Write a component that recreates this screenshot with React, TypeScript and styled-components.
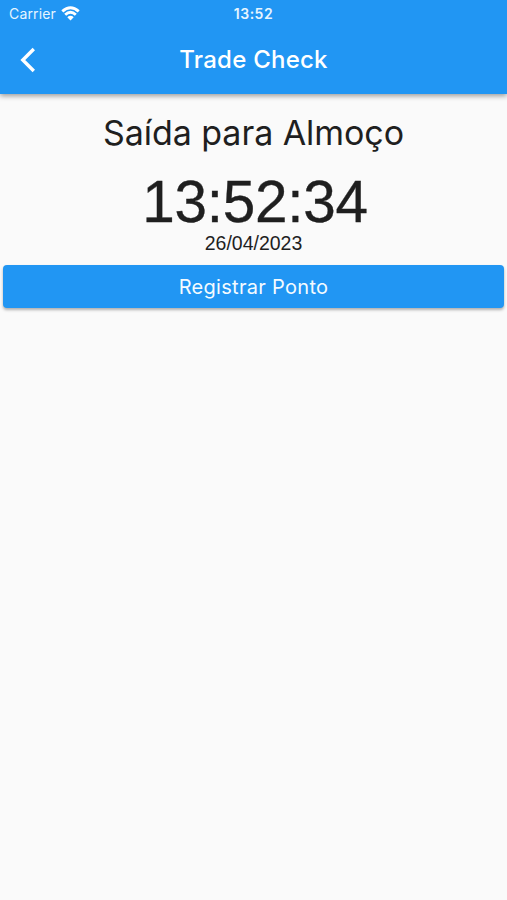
import React from "react";
import styled, { createGlobalStyle } from "styled-components";

const GlobalStyle = createGlobalStyle`
  * { box-sizing: border-box; }
  body { margin: 0; background: #fafafa; }
`;

const Screen = styled.div`
  min-height: 900px;
  background: #fafafa;
  color: #1f1f1f;
  font-family: Inter, "Liberation Sans", sans-serif;
  overflow: hidden;
`;

const Header = styled.header`
  height: 94px;
  background: #2196f3;
  color: #fff;
  box-shadow: 0 2px 5px rgba(0, 0, 0, 0.38);
`;

const StatusBar = styled.div`
  display: grid;
  grid-template-columns: 1fr auto 1fr;
  align-items: center;
  height: 27px;
  padding: 0 9px;
  color: #e6f5ff;
`;

const Carrier = styled.div`
  display: flex;
  align-items: center;
  gap: 5.5px;
  font-size: 14px;
  line-height: 27px;
  letter-spacing: 0.15px;
`;

const StatusTime = styled.time`
  font-size: 14px;
  font-weight: 600;
  line-height: 27px;
  letter-spacing: 0.5px;
`;

const NavBar = styled.nav`
  display: grid;
  grid-template-columns: 76px 1fr 76px;
  align-items: center;
  height: 65px;
`;

const BackButton = styled.button`
  display: flex;
  align-items: center;
  height: 48px;
  padding: 0 0 0 18px;
  border: 0;
  background: none;
  color: inherit;
`;

const Title = styled.h1`
  margin: 0;
  font-size: 24px;
  font-weight: 500;
  line-height: 32px;
  letter-spacing: 0.25px;
  text-align: center;
`;

const Content = styled.main`
  display: flex;
  flex-direction: column;
  align-items: center;
  padding: 18px 3px 0;
`;

const Heading = styled.h2`
  margin: 0;
  font-size: 34px;
  font-weight: 400;
  line-height: 42px;
  letter-spacing: -0.06px;
`;

const Clock = styled.time`
  margin-top: 15px;
  padding-left: 3px;
  font-family: "Liberation Sans", sans-serif;
  font-size: 58.5px;
  line-height: 66px;
  letter-spacing: -0.3px;
  -webkit-text-stroke: 0.35px currentColor;
`;

const DateText = styled.time`
  margin-top: -3px;
  font-family: "Liberation Sans", sans-serif;
  font-size: 19.5px;
  line-height: 22px;
`;

const PunchButton = styled.button`
  width: 100%;
  height: 43px;
  margin-top: 11px;
  padding: 0;
  border: 0;
  border-radius: 4px;
  background: #2196f3;
  box-shadow: 0 2px 3px rgba(0, 0, 0, 0.3);
  color: #f4fbff;
  font-family: inherit;
  font-size: 20px;
  font-weight: 400;
  letter-spacing: 0.3px;
`;

const WifiIcon = () => (
  <svg width="19" height="15" viewBox="0 0 19 15" fill="none" stroke="#fff" strokeWidth="2.9">
    <path d="M1.3 5.4Q9.5 -2 17.7 5.4" />
    <path d="M4.2 8.8Q9.5 3.9 14.8 8.8" />
    <path d="M6.3 11.3Q9.5 8.4 12.7 11.3L9.5 14.6Z" fill="#fff" stroke="none" />
  </svg>
);

const BackIcon = () => (
  <svg width="20" height="26" viewBox="0 0 20 26" fill="none" stroke="#fff" strokeWidth="3.4">
    <path d="M15.8 2L4.8 13L15.8 24" />
  </svg>
);

export default function App() {
  return (
    <>
      <GlobalStyle />
      <Screen>
        <Header>
          <StatusBar>
            <Carrier>
              <span>Carrier</span>
              <WifiIcon />
            </Carrier>
            <StatusTime>13:52</StatusTime>
          </StatusBar>
          <NavBar>
            <BackButton aria-label="Voltar">
              <BackIcon />
            </BackButton>
            <Title>Trade Check</Title>
          </NavBar>
        </Header>
        <Content>
          <Heading>Saída para Almoço</Heading>
          <Clock>13:52:34</Clock>
          <DateText>26/04/2023</DateText>
          <PunchButton>Registrar Ponto</PunchButton>
        </Content>
      </Screen>
    </>
  );
}
